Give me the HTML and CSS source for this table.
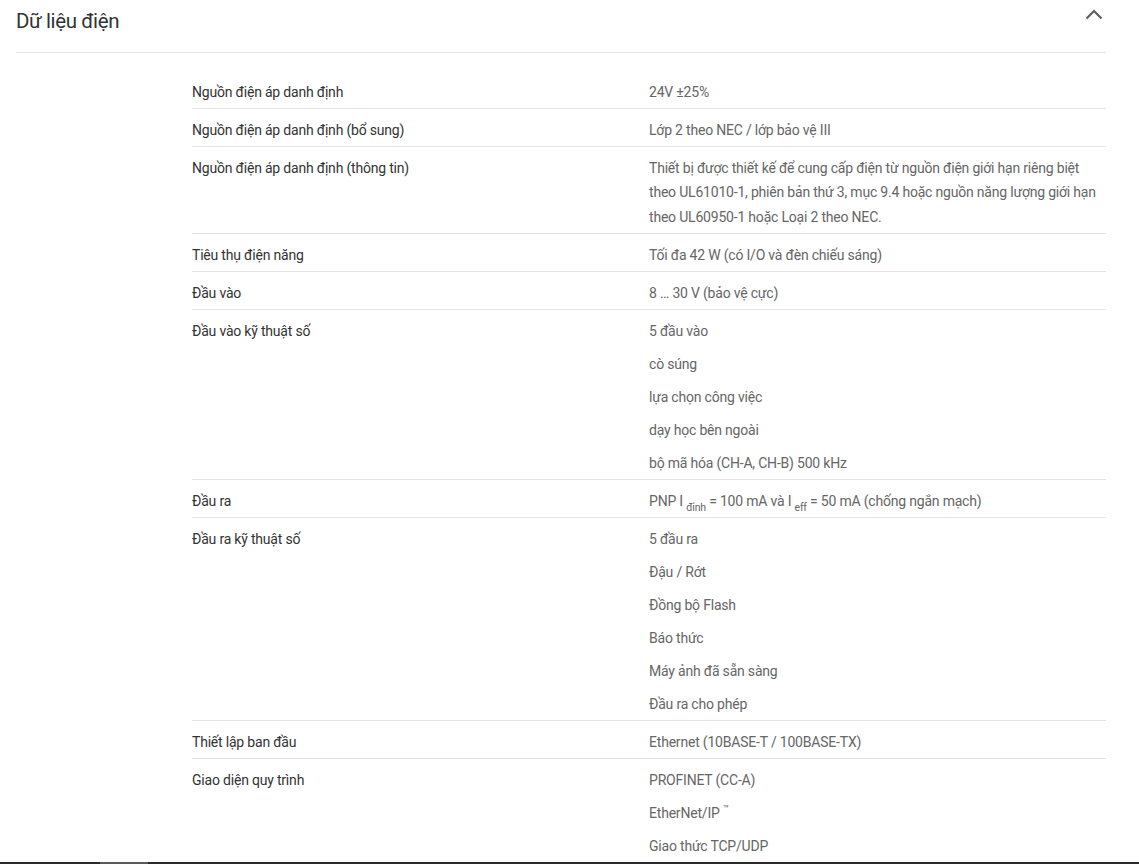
FILE: index.html
```html
<!DOCTYPE html>
<html lang="vi">
<head>
<meta charset="utf-8">
<title>Dữ liệu điện</title>
<link rel="stylesheet" href="styles.css">
</head>
<body>
<section class="panel">
  <header class="panel-head">
    <h2 class="panel-title">Dữ liệu điện</h2>
    <button class="toggle" aria-label="Thu gọn">
      <svg width="18" height="12" viewBox="0 0 18 12"><path d="M1.5 10.5 L9 3 L16.5 10.5" fill="none" stroke="#5f5f5f" stroke-width="2.2"/></svg>
    </button>
  </header>
  <div class="specs">
    <div class="row"><div class="label">Nguồn điện áp danh định</div><div class="value">24V ±25%</div></div>
    <div class="row"><div class="label">Nguồn điện áp danh định (bổ sung)</div><div class="value">Lớp 2 theo NEC / lớp bảo vệ III</div></div>
    <div class="row"><div class="label">Nguồn điện áp danh định (thông tin)</div><div class="value">Thiết bị được thiết kế để cung cấp điện từ nguồn điện giới hạn riêng biệt theo UL61010-1, phiên bản thứ 3, mục 9.4 hoặc nguồn năng lượng giới hạn theo UL60950-1 hoặc Loại 2 theo NEC.</div></div>
    <div class="row"><div class="label">Tiêu thụ điện năng</div><div class="value">Tối đa 42 W (có I/O và đèn chiếu sáng)</div></div>
    <div class="row"><div class="label">Đầu vào</div><div class="value">8 … 30 V (bảo vệ cực)</div></div>
    <div class="row"><div class="label">Đầu vào kỹ thuật số</div>
      <ul class="value list">
        <li>5 đầu vào</li>
        <li>cò súng</li>
        <li>lựa chọn công việc</li>
        <li>dạy học bên ngoài</li>
        <li>bộ mã hóa (CH-A, CH-B) 500 kHz</li>
      </ul>
    </div>
    <div class="row"><div class="label">Đầu ra</div><div class="value">PNP I <sub>đỉnh</sub> = 100 mA và I <sub>eff</sub> = 50 mA (chống ngắn mạch)</div></div>
    <div class="row"><div class="label">Đầu ra kỹ thuật số</div>
      <ul class="value list">
        <li>5 đầu ra</li>
        <li>Đậu / Rớt</li>
        <li>Đồng bộ Flash</li>
        <li>Báo thức</li>
        <li>Máy ảnh đã sẵn sàng</li>
        <li>Đầu ra cho phép</li>
      </ul>
    </div>
    <div class="row"><div class="label">Thiết lập ban đầu</div><div class="value">Ethernet (10BASE-T / 100BASE-TX)</div></div>
    <div class="row"><div class="label">Giao diện quy trình</div>
      <ul class="value list">
        <li>PROFINET (CC-A)</li>
        <li>EtherNet/IP <sup>™</sup></li>
        <li>Giao thức TCP/UDP</li>
      </ul>
    </div>
  </div>
</section>
<div class="bottom-bar"><span class="thumb"></span></div>
</body>
</html>
```

FILE: styles.css
```css
html, body {
  margin: 0;
  padding: 0;
  background: #ffffff;
}
body {
  font-family: Roboto, "Noto Sans", "Liberation Sans", sans-serif;
  color: #333333;
  overflow: hidden;
  height: 864px;
}
.panel {
  padding: 0 33px 0 16px;
}
.panel-head {
  display: flex;
  justify-content: space-between;
  align-items: flex-start;
  height: 52px;
  border-bottom: 1px solid #e3e3e3;
}
.panel-title {
  margin: 0;
  padding-top: 7px;
  font-size: 20.5px;
  line-height: 28px;
  font-weight: 400;
  letter-spacing: -0.4px;
  color: #333333;
}
.toggle {
  margin: 6px 2px 0 0;
  padding: 0;
  border: 0;
  background: none;
  width: 20px;
  height: 16px;
  display: flex;
  align-items: center;
  justify-content: center;
}
.specs {
  margin: 17.5px 0 0 176px;
}
.row {
  display: grid;
  grid-template-columns: 457px 1fr;
  padding: 9.25px 0 3.25px;
  border-bottom: 1px solid #e3e3e3;
  font-size: 14px;
  line-height: 24.5px;
  letter-spacing: -0.2px;
}
.label {
  color: #333333;
}
.value {
  color: #666666;
  padding-right: 6px;
}
.list {
  list-style: none;
  margin: 0;
  padding: 0 6px 0 0;
  display: flex;
  flex-direction: column;
  gap: 8.5px;
}
sub {
  font-size: 10.5px;
  line-height: 0;
  vertical-align: -5px;
}
sup {
  font-size: 10px;
  line-height: 0;
  vertical-align: 6px;
}
.bottom-bar {
  position: fixed;
  left: 0;
  right: 0;
  bottom: 0;
  height: 2px;
  background: #2b2b2b;
}
.bottom-bar .thumb {
  position: absolute;
  left: 100px;
  top: 0;
  width: 48px;
  height: 2px;
  background: #5a5a5a;
}
```
